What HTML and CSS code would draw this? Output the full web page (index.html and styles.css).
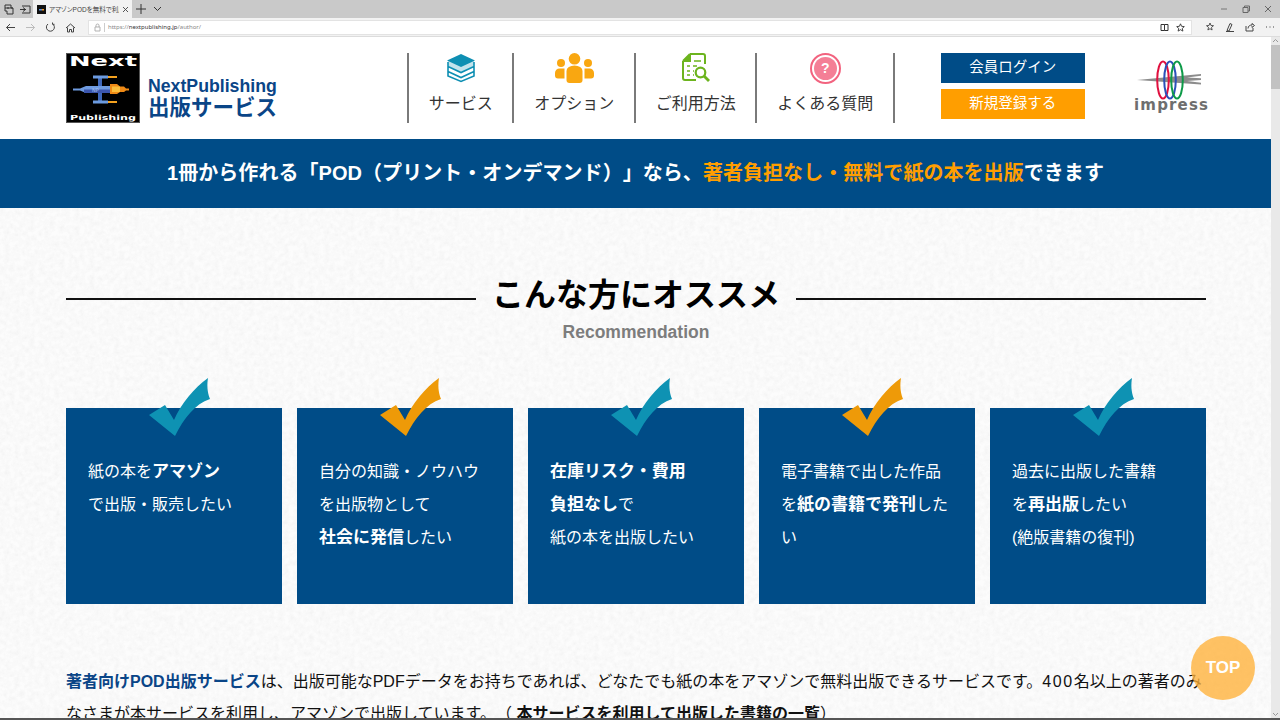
FILE: index.html
```html
<!DOCTYPE html>
<html lang="ja">
<head>
<meta charset="utf-8">
<title>アマゾンPODを無料で利用</title>
<link rel="stylesheet" href="styles.css">
</head>
<body>
<div class="browser">
  <div class="tabbar">
    <div class="tab-tools">
      <svg class="ico" width="16" height="18" viewBox="0 0 16 18"><path d="M4 5h6v3h2v6H6v-3H4zM6 8h6M4 8h4" fill="none" stroke="#333" stroke-width="1"/></svg>
      <svg class="ico" width="16" height="18" viewBox="0 0 16 18"><path d="M5 6h8v7H5M3 9.500h6M6 7.500l2.500 2-2.500 2" fill="none" stroke="#333" stroke-width="1"/></svg>
    </div>
    <div class="tab">
      <svg class="favicon" width="9" height="9" viewBox="0 0 9 9"><rect width="9" height="9" fill="#111"/><rect x="2" y="4" width="3" height="1.500" fill="#5a8fd8"/><rect x="5" y="4" width="2" height="1.500" fill="#f59a23"/></svg>
      <span class="tab-title">アマゾンPODを無料で利用</span>
      <svg width="7" height="7" viewBox="0 0 7 7"><path d="M1 1l5 5M6 1L1 6" stroke="#444" stroke-width="0.900"/></svg>
    </div>
    <svg class="newtab" width="10" height="10" viewBox="0 0 10 10"><path d="M5 0v10M0 5h10" stroke="#333" stroke-width="1"/></svg>
    <svg class="tablist" width="9" height="6" viewBox="0 0 9 6"><path d="M1 1l3.500 3.500L8 1" fill="none" stroke="#333" stroke-width="1"/></svg>
    <div class="winctl">
      <svg width="8" height="8" viewBox="0 0 8 8"><path d="M1 4h6" stroke="#777" stroke-width="1"/></svg>
      <svg width="8" height="8" viewBox="0 0 8 8"><path d="M1 2.500h5v5H1zM2.500 2.500V1h5v5H6" fill="none" stroke="#666" stroke-width="1"/></svg>
      <svg width="8" height="8" viewBox="0 0 8 8"><path d="M1 1l6 6M7 1L1 7" stroke="#666" stroke-width="1"/></svg>
    </div>
  </div>
  <div class="toolbar">
    <div class="navbtns">
      <svg width="11" height="11" viewBox="0 0 11 11"><path d="M10 5.500H1.500M5 2L1.500 5.500 5 9" fill="none" stroke="#444" stroke-width="1"/></svg>
      <svg width="11" height="11" viewBox="0 0 11 11"><path d="M1 5.500h8.500M6 2l3.500 3.500L6 9" fill="none" stroke="#bbb" stroke-width="1"/></svg>
      <svg width="11" height="11" viewBox="0 0 11 11"><path d="M7.500 1.800A4 4 0 1 1 3 2M7.500 .5v1.800H9.500" fill="none" stroke="#444" stroke-width="1"/></svg>
      <svg width="11" height="11" viewBox="0 0 11 11"><path d="M1 6l4.500-4L10 6M2.500 5.500V10h2V7.500h2V10h2V5.500" fill="none" stroke="#444" stroke-width="1"/></svg>
    </div>
    <div class="address">
      <svg width="7" height="9" viewBox="0 0 7 9"><path d="M1 4h5v4H1zM2 4V2.500a1.500 1.500 0 0 1 3 0V4" fill="none" stroke="#aaa" stroke-width="0.900"/></svg>
      <span class="addr-sep"></span>
      <span class="url">https://<b>nextpublishing.jp</b>/author/</span>
      <svg class="addr-reader" width="9" height="9" viewBox="0 0 9 9"><path d="M1 1.500h3.500v6H1zM4.500 1.500H8v6H4.500" fill="none" stroke="#333" stroke-width="1"/></svg>
      <svg width="9" height="9" viewBox="0 0 9 9"><path d="M4.500 .8l1.100 2.500 2.700.3-2 1.800.6 2.700-2.400-1.400-2.400 1.400.6-2.700-2-1.800 2.700-.3z" fill="none" stroke="#333" stroke-width="0.900"/></svg>
    </div>
    <div class="hub">
      <svg width="10" height="10" viewBox="0 0 10 10"><path d="M5 1l1 2.500 2.500.2-2 1.700.6 2.600L5 6.700 2.900 8l.6-2.600-2-1.700L4 3.500z" fill="none" stroke="#444" stroke-width="0.900"/></svg>
      <svg width="10" height="10" viewBox="0 0 10 10"><path d="M2 8.500L5 1.500l2 1L4 9zM1 9.500h8" fill="none" stroke="#444" stroke-width="1"/></svg>
      <svg width="10" height="10" viewBox="0 0 10 10"><path d="M1 4v5h7V6M3 6.500C3 4 5 3 7 3V1.500L9.500 3.500 7 5.500V4.200" fill="none" stroke="#444" stroke-width="1"/></svg>
      <svg width="10" height="10" viewBox="0 0 10 10"><path d="M1 5h1M4.500 5h1M8 5h1" stroke="#444" stroke-width="1"/></svg>
    </div>
  </div>
  <div class="viewport">
    <div class="page">
      <header class="site-header">
        <a class="brand">
          <svg class="brand-mark" width="74" height="70" viewBox="0 0 74 70">
            <rect width="74" height="70" fill="#000"/>
            <rect x=".5" y=".5" width="73" height="69" fill="none" stroke="#555"/>
            <text x="3" y="13" class="mark-next" textLength="68" lengthAdjust="spacingAndGlyphs">Next</text>
            <rect x="32" y="24" width="4" height="25" fill="#3f68bb"/>
            <rect x="27" y="22.500" width="15" height="3" fill="#6c9be0"/>
            <rect x="27" y="47.500" width="15" height="3" fill="#6c9be0"/>
            <rect x="42" y="23" width="9" height="2" fill="#f4a21f"/>
            <rect x="42" y="48" width="9" height="2" fill="#f4a21f"/>
            <path d="M7 35.500h7l6-2.500h24v7H20l-6-2.500H7z" fill="#6f9be0"/>
            <rect x="18" y="36.500" width="26" height="3.500" fill="#3c56ae"/>
            <path d="M44 31h7l3 2.500h4l2 2h3v2h-3l-2 1.500h-4l-3 2h-7z" fill="#ef8a16"/>
            <rect x="46" y="33.500" width="8" height="5.500" fill="#fbbe3c"/>
            <text x="26" y="38.500" class="mark-np">NP</text>
            <text x="4" y="67" class="mark-pub" textLength="66" lengthAdjust="spacingAndGlyphs">Publishing</text>
          </svg>
          <div class="brand-text">
            <div class="brand-en">NextPublishing</div>
            <div class="brand-ja">出版サービス</div>
          </div>
        </a>
        <nav class="gnav">
          <a class="gnav-item">
            <svg width="28" height="30" viewBox="0 0 28 30">
              <path d="M14 1L28 7.500 14 14 0 7.500z" fill="#0e8fb3"/>
              <path d="M1 7.500V13l13 6 13-6V7.500" fill="#0e8fb3" opacity=".25"/>
              <path d="M1 9v4.500l13 6 13-6V9M1 13.500v5l13 6 13-6v-5M1 18.500v4.500l13 5.500L27 23v-4.500" fill="none" stroke="#0e8fb3" stroke-width="1.600"/>
            </svg>
            <span>サービス</span>
          </a>
          <a class="gnav-item">
            <svg width="39" height="30" viewBox="0 0 39 30" fill="#f9a711">
              <circle cx="19.500" cy="5.800" r="5.800"/>
              <circle cx="6" cy="10" r="4"/>
              <circle cx="33" cy="10" r="4"/>
              <path d="M11.500 18a8 5.500 0 0 1 16 0v9a3 3 0 0 1-3 3h-10a3 3 0 0 1-3-3z"/>
              <path d="M9.500 15.500v10H3a3 3 0 0 1-3-3V20a4.500 4.500 0 0 1 4.500-4.500zM29.500 15.500v10H36a3 3 0 0 0 3-3V20a4.500 4.500 0 0 0-4.500-4.500z"/>
            </svg>
            <span>オプション</span>
          </a>
          <a class="gnav-item">
            <svg width="28" height="30" viewBox="0 0 28 30" fill="none" stroke="#6cb41e" stroke-width="2">
              <path d="M8 1h13a2 2 0 0 1 2 2v8M1 8v17a2 2 0 0 0 2 2h11M8 1L1 8"/>
              <path d="M8 1v7H1" fill="#6cb41e"/>
              <path d="M12 8h7M5 13h3M11 13h4M5 18h3M11 18h1M5 22h3M11 22h1" stroke-width="1.600"/>
              <circle cx="18.500" cy="19.500" r="4.800" stroke-width="2.200"/>
              <path d="M22 23l5 5" stroke-width="2.800"/>
            </svg>
            <span>ご利用方法</span>
          </a>
          <a class="gnav-item gnav-last">
            <span class="faq-ring"><span class="faq-dot">?</span></span>
            <span>よくある質問</span>
          </a>
        </nav>
        <div class="cta">
          <a class="btn btn-login">会員ログイン</a>
          <a class="btn btn-signup">新規登録する</a>
        </div>
        <svg class="impress" width="76" height="58" viewBox="0 0 76 58">
          <path d="M4 20L68 14v1.800l-14 1.700 14 .7v1.800l-14 1 14 1.800v1.800z" fill="#8c8c8c"/>
          <ellipse cx="30" cy="20" rx="5.800" ry="18.500" fill="none" stroke="#e0103f" stroke-width="2"/>
          <ellipse cx="37" cy="20" rx="5.800" ry="18.500" fill="none" stroke="#2b50b8" stroke-width="2"/>
          <ellipse cx="44" cy="20" rx="5.800" ry="18.500" fill="none" stroke="#0d9a48" stroke-width="2"/>
          <text x="1" y="50" class="impress-word" textLength="74">impress</text>
        </svg>
      </header>
      <div class="band">1冊から作れる「POD（プリント・オンデマンド）」なら、<em>著者負担なし・無料で紙の本を出版</em>できます</div>
      <main class="content">
        <div class="heading">
          <span class="heading-rule"></span>
          <h2>こんな方にオススメ</h2>
          <span class="heading-rule"></span>
        </div>
        <p class="heading-sub">Recommendation</p>
        <ul class="cards">
          <li class="card">
            <svg class="check" width="62" height="58" viewBox="0 0 62 58"><path class="check-teal" d="M59 0C58 6 58 14 61 21C46 26 35 40 26 58L0 37L16 27L25 42C32 26 45 10 59 0Z"/></svg>
            <p>紙の本を<b>アマゾン</b><br>で出版・販売したい</p>
          </li>
          <li class="card">
            <svg class="check" width="62" height="58" viewBox="0 0 62 58"><path class="check-orange" d="M59 0C58 6 58 14 61 21C46 26 35 40 26 58L0 37L16 27L25 42C32 26 45 10 59 0Z"/></svg>
            <p>自分の知識・ノウハウ<br>を出版物として<br><b>社会に発信</b>したい</p>
          </li>
          <li class="card">
            <svg class="check" width="62" height="58" viewBox="0 0 62 58"><path class="check-teal" d="M59 0C58 6 58 14 61 21C46 26 35 40 26 58L0 37L16 27L25 42C32 26 45 10 59 0Z"/></svg>
            <p><b>在庫リスク・費用<br>負担なし</b>で<br>紙の本を出版したい</p>
          </li>
          <li class="card">
            <svg class="check" width="62" height="58" viewBox="0 0 62 58"><path class="check-orange" d="M59 0C58 6 58 14 61 21C46 26 35 40 26 58L0 37L16 27L25 42C32 26 45 10 59 0Z"/></svg>
            <p>電子書籍で出した作品<br>を<b>紙の書籍で発刊</b>した<br>い</p>
          </li>
          <li class="card">
            <svg class="check" width="62" height="58" viewBox="0 0 62 58"><path class="check-teal" d="M59 0C58 6 58 14 61 21C46 26 35 40 26 58L0 37L16 27L25 42C32 26 45 10 59 0Z"/></svg>
            <p>過去に出版した書籍<br>を<b>再出版</b>したい<br>(絶版書籍の復刊)</p>
          </li>
        </ul>
        <p class="intro"><b class="intro-lead">著者向けPOD出版サービス</b>は、出版可能なPDFデータをお持ちであれば、どなたでも紙の本をアマゾンで無料出版できるサービスです。<span class="digits">400</span>名以上の著者のみなさまが本サービスを利用し、アマゾンで出版しています。（ <b>本サービスを利用して出版した書籍の一覧</b>）</p>
      </main>
      <a class="to-top">TOP</a>
    </div>
    <div class="scrollbar">
      <svg class="sb-arrow" width="9" height="8" viewBox="0 0 9 8"><path d="M2 5l2.500-2.500L7 5" fill="none" stroke="#999" stroke-width="1"/></svg>
      <span class="sb-thumb"></span>
      <svg class="sb-arrow sb-down" width="9" height="8" viewBox="0 0 9 8"><path d="M2 3l2.500 2.500L7 3" fill="none" stroke="#999" stroke-width="1"/></svg>
    </div>
  </div>
</div>
</body>
</html>
```
FILE: styles.css
```css
* { box-sizing: border-box; }
html, body { margin: 0; height: 100%; overflow: hidden; }
body { font-family: "Liberation Sans", "Noto Sans CJK JP", sans-serif; color: #111; text-spacing-trim: space-all; }
a { color: inherit; text-decoration: none; }
ul { list-style: none; margin: 0; padding: 0; }
p, h2 { margin: 0; }

.browser { display: flex; flex-direction: column; height: 720px; border-bottom: 2px solid #555; }

.tabbar { height: 18px; background: #c9c9c9; display: flex; align-items: center; flex: none; }
.tab-tools { display: flex; width: 33px; padding-left: 1px; }
.ico { display: block; }
.tab { width: 99px; height: 18px; background: #f2f2f2; display: flex; align-items: center; padding: 0 3px 0 4px; gap: 3px; }
.tab-title { font-size: 6.500px; font-feature-settings: "palt"; color: #444; white-space: nowrap; overflow: hidden; flex: 1; }
.newtab { margin-left: 4px; }
.tablist { margin-left: 7px; }
.winctl { margin-left: auto; display: flex; gap: 14px; padding-right: 8px; }

.toolbar { height: 19px; background: #f2f2f2; border-bottom: 1px solid #dcdcdc; display: flex; align-items: center; flex: none; }
.navbtns { width: 88px; display: flex; gap: 9px; padding-left: 5px; }
.address { width: 1104px; height: 15px; background: #fff; border: 1px solid #e3e3e3; display: flex; align-items: center; padding: 0 6px 0 5px; }
.addr-sep { width: 1px; height: 9px; background: #ccc; margin: 0 3px 0 3px; }
.url { font-family: "Noto Sans", sans-serif; font-size: 6px; color: #888; flex: 1; white-space: nowrap; }
.url b { font-weight: 400; color: #333; }
.addr-reader { margin-right: 7px; }
.hub { flex: 1; display: flex; justify-content: space-between; padding: 0 5px 0 13px; }

.viewport { flex: 1; display: flex; min-height: 0; }
.page { flex: 1; min-width: 0; position: relative; overflow: hidden; background-color: #fcfcfc; background-image: url("data:image/svg+xml;utf8,<svg xmlns='http://www.w3.org/2000/svg' width='320' height='320'><filter id='n'><feTurbulence type='fractalNoise' baseFrequency='.2' numOctaves='3' seed='4' stitchTiles='stitch'/><feColorMatrix values='0 0 0 0 .82 0 0 0 0 .82 0 0 0 0 .82 .8 0 0 0 -.26'/></filter><rect width='320' height='320' filter='url(%23n)'/></svg>"); }

.site-header { height: 102px; background: #fff; padding: 16px 0 0 66px; display: flex; align-items: flex-start; }
.brand { display: flex; width: 340.500px; }
.brand-mark { display: block; }
.mark-next { font: 700 14px "DejaVu Sans", sans-serif; fill: #fff; }
.mark-pub { font: 700 7px "DejaVu Sans", sans-serif; fill: #fff; }
.mark-np { font: 400 5px "DejaVu Sans", sans-serif; fill: #aac4ee; }
.brand-text { margin: 23px 0 0 8px; color: #0a4587; }
.brand-en { font-size: 17.700px; font-weight: 700; line-height: 20px; white-space: nowrap; }
.brand-ja { font-size: 21.500px; font-weight: 700; line-height: 24px; white-space: nowrap; }

.gnav { display: flex; height: 70px; }
.gnav-item { display: flex; flex-direction: column; align-items: center; border-left: 2px solid #7a7a7a; margin-right: -1px; padding: 0 20.250px; height: 70px; font-size: 16px; color: #333; white-space: nowrap; }
.gnav-item svg { display: block; height: 30px; flex: none; }
.gnav-item > span:last-child { margin-top: 5px; line-height: 32px; }
.gnav-last { border-right: 2px solid #7a7a7a; margin-right: 0; padding-right: 19.500px; }
.faq-ring { width: 31px; height: 31px; border-radius: 50%; border: 2px solid #f2637f; padding: 2px; flex: none; }
.faq-dot { display: block; width: 23px; height: 23px; border-radius: 50%; background: #f47f96; color: #fff; font: 700 14px/23px "Liberation Sans", sans-serif; text-align: center; }
.gnav-last > span:last-child { margin-top: 4px; }

.cta { margin-left: 46px; width: 144px; display: flex; flex-direction: column; gap: 6px; }
.btn { height: 30px; line-height: 28px; text-align: center; color: #fff; font-size: 14.500px; }
.btn-login { background: #004c87; }
.btn-signup { background: #ff9e00; }

.impress { margin: 7px 0 0 48px; flex: none; }
.impress-word { font: 700 15px "DejaVu Sans", sans-serif; fill: #6e6e6e; }

.band { height: 69px; background: #004c87; color: #fff; font-size: 20px; font-weight: 700; line-height: 68px; letter-spacing: .05px; text-align: center; white-space: nowrap; }
.band em { font-style: normal; color: #ff9e00; }

.content { padding: 0 66px; width: 1272px; }
.heading { display: flex; align-items: center; margin-top: 64px; gap: 16px; height: 46px; }
.heading-rule { flex: 1; height: 2px; background: #111; margin-top: 7px; }
.heading h2 { font-size: 32px; font-weight: 700; color: #000; line-height: 46px; white-space: nowrap; }
.heading-sub { font-size: 17.500px; font-weight: 700; line-height: 22px; color: #7d7d7d; text-align: center; margin-top: 3px; }
.cards { display: flex; gap: 15px; margin-top: 65px; }
.card { position: relative; width: 216px; height: 196px; background: #004c87; color: #fff; padding: 47px 0 0 22px; font-size: 16px; line-height: 33px; white-space: nowrap; }
.card b { font-size: 17px; }
.check { position: absolute; left: 83px; top: -30px; }
.check-teal { fill: #0e92b3; }
.check-orange { fill: #ee9a08; }
.intro { margin-top: 62px; font-size: 16px; line-height: 32px; color: #111; }
.intro-lead { color: #0a4587; }
.digits { letter-spacing: 1.600px; }

.to-top { position: absolute; left: 1191px; top: 599px; width: 64px; height: 64px; border-radius: 50%; background: rgba(255, 177, 56, .78); color: #fff; font-size: 17px; font-weight: 700; line-height: 64px; text-align: center; }

.scrollbar { width: 9px; background: #e9e9e9; flex: none; display: flex; flex-direction: column; }
.sb-arrow { display: block; flex: none; }
.sb-thumb { display: block; height: 44px; background: #c2c2c2; }
.sb-down { margin-top: auto; }
```
